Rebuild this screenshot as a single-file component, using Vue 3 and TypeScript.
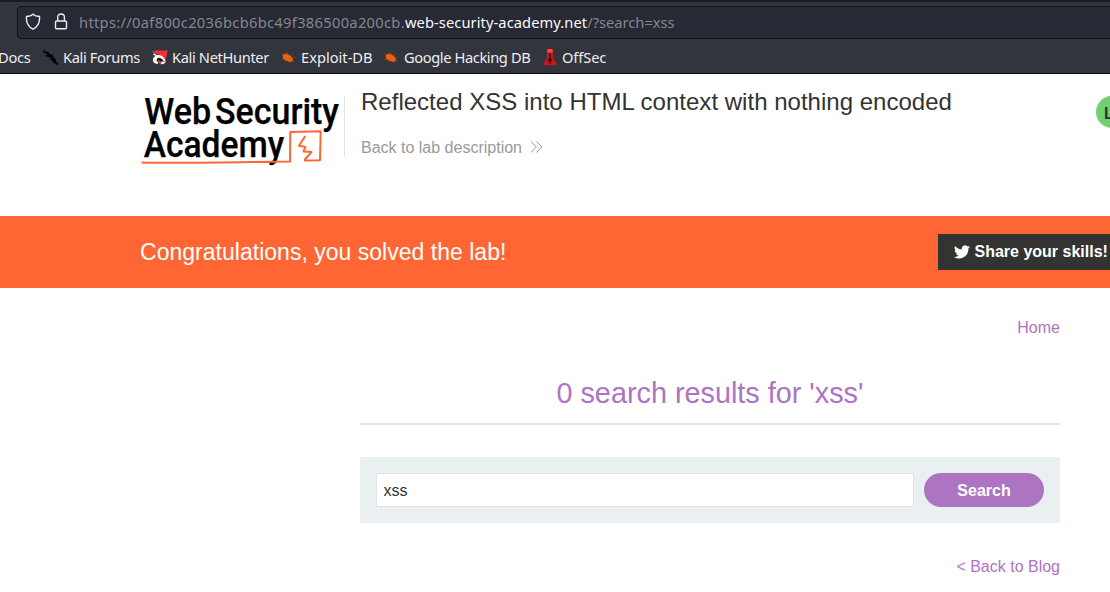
<script setup lang="ts">
import { ref } from 'vue'

type BookmarkIcon = 'none' | 'forum' | 'hunter' | 'bug' | 'offsec'

interface Bookmark {
  label: string
  icon: BookmarkIcon
  width: number
  tracking: number
}

const bookmarks: Bookmark[] = [
  { label: 'Docs', icon: 'none', width: 43, tracking: -0.3 },
  { label: 'Kali Forums', icon: 'forum', width: 109, tracking: -0.37 },
  { label: 'Kali NetHunter', icon: 'hunter', width: 129, tracking: -0.36 },
  { label: 'Exploit-DB', icon: 'bug', width: 103, tracking: 0 },
  { label: 'Google Hacking DB', icon: 'bug', width: 158, tracking: -0.4 },
  { label: 'OffSec', icon: 'offsec', width: 80, tracking: -0.1 },
]

const query = ref('xss')
</script>

<template>
  <div class="window">
    <header class="chrome">
      <div class="address">
        <svg class="shield" width="16" height="18" viewBox="0 0 16 18">
          <path d="M8 1.2C6.2 2.9 4 3.3 1.5 3.5C1 9.2 3.1 13.8 8 16.2C12.9 13.8 15 9.2 14.5 3.5C12 3.3 9.8 2.9 8 1.2Z" />
        </svg>
        <svg class="lock" width="14" height="18" viewBox="0 0 14 18">
          <rect x="1.5" y="8" width="11" height="7.8" rx="1.3" />
          <path d="M3.7 8V4.2C3.7 -.1 10.4 -.1 10.4 4.2V8" />
        </svg>
        <span class="url"><span class="host">https://0af800c2036bcb6bc49f386500a200cb.</span><b>web-security-academy.net</b>/?search=xss</span>
      </div>
      <nav class="bookmarks">
        <a v-for="item in bookmarks" :key="item.label" class="bookmark" :class="item.icon" :style="{ width: item.width + 'px', letterSpacing: item.tracking + 'px' }">
          <svg v-if="item.icon === 'forum'" width="16" height="16" viewBox="0 0 16 16">
            <path fill="#000" d="M0 0L4 2L5 1.2L6.5 3.7L10 5.3L10.5 7.3L12.5 9.3L13.7 12.5L16 13.8L14 14.8L11 14L9.3 11L6.5 9L5.5 7L3 6.2L1.8 3.5L.4 2.8Z" />
            <path stroke="#777b80" stroke-width=".6" fill="none" d="M1.5 3L4 5M6.5 7L8 9M11 13L12 14.5" />
          </svg>
          <svg v-else-if="item.icon === 'hunter'" width="16" height="16" viewBox="0 0 16 16">
            <path fill="#f52d38" d="M2 .5H15.7L13 13L11 9L8 5L4 3.5Z" />
            <path fill="#fff" d="M0 .7L4 4.2L2 3.6L5 5.2C9 4 13 7.5 13.7 12L11.5 10.8C9.5 7.3 6 7 4.8 9.3C4.1 11 5.5 12 6.5 12.3L5.5 14C2.5 13.8 .9 12.2 .9 10C.7 8 2.3 6.6 3.6 6L.5 4L2.5 3.8Z" />
            <path fill="#111" d="M4.8 9.5C6 7.2 9 8.3 11 11L10 12C8.8 10.2 7 9 6 10L6.5 12Z" />
            <path fill="#f52d38" d="M6 10.8C7 9.7 9 11 9.7 12.5L8 13.8L6.6 12.6Z" />
            <path fill="#fff" d="M9.8 11.3L13.7 12.2L11.5 14L8.5 14.3Z" />
          </svg>
          <svg v-else-if="item.icon === 'bug'" width="16" height="16" viewBox="0 0 16 16">
            <path fill="#ed6010" d="M2.6 5L5.5 3.5L8.7 4.5L12 7L13.4 10.7L10.5 12L5.8 10.7L3 8.2Z" />
            <path stroke="#ae4c1d" stroke-width=".6" fill="none" d="M4 5L1.8 3.2M7 5L7.8 2.3M9 6L12.5 4.3M11 8L15 7.4M5 9L1.3 9.6M7 10L4.4 12.5M10 11L10.4 13M12 10L14.7 12" />
          </svg>
          <svg v-else-if="item.icon === 'offsec'" width="16" height="17" viewBox="0 0 16 17">
            <path fill="#cf141c" d="M5 0H11V9.5L14.5 14V16.3H1.5V14L5 9.5Z" />
            <path fill="#ff4149" d="M5.5 0H10.5V3.5H5.5Z" />
            <path fill="#28080c" d="M7.3 4.5H8.7V9L10.3 11.5L8.6 12.5V15H7.4V12.5L5.7 11.5L7.3 9Z" />
          </svg>
          <span>{{ item.label }}</span>
        </a>
      </nav>
    </header>

    <section class="lab-header">
      <svg class="logo" width="205" height="76" viewBox="140 92 205 76">
        <g class="logo-text">
          <text x="144.2" y="124.3" font-size="37.3" textLength="67" lengthAdjust="spacingAndGlyphs">Web</text>
          <text x="215" y="124.3" font-size="37.3" textLength="124" lengthAdjust="spacingAndGlyphs">Security</text>
          <text x="143.7" y="157" font-size="37.3" textLength="140.5" lengthAdjust="spacingAndGlyphs">Academy</text>
        </g>
        <path class="logo-line" stroke-width="2" d="M141.5 162.5C180 163.5 220 162.5 290 161.5L290.3 132L320.7 131.3L320 160.3L304 160.5" />
        <path class="logo-line" stroke-width="2" d="M305.2 136L299 145.7L305.5 147L303.5 151.5L311.5 152L304.5 160" />
      </svg>
      <div class="lab-copy">
        <h2>Reflected XSS into HTML context with nothing encoded</h2>
        <a class="back-lab">Back to lab description
          <svg width="14" height="14" viewBox="0 0 14 14"><path d="M1 1.5L6.3 7L1 12.5M6.5 1.5L11.8 7L6.5 12.5" /></svg>
        </a>
      </div>
      <span class="status">LAB</span>
    </section>

    <section class="banner">
      <span class="congrats">Congratulations, you solved the lab!</span>
      <button class="share">
        <svg width="16" height="14" viewBox="0 0 24 20">
          <path d="M24 2.4a10 10 0 0 1-2.8.8A5 5 0 0 0 23.3.5a10 10 0 0 1-3.1 1.2 4.9 4.9 0 0 0-8.4 4.5A14 14 0 0 1 1.7 1a4.9 4.9 0 0 0 1.5 6.6A5 5 0 0 1 1 7a4.9 4.9 0 0 0 4 4.9 5 5 0 0 1-2.3.1 4.9 4.9 0 0 0 4.6 3.4A10 10 0 0 1 0 17.4 14 14 0 0 0 21.5 4.9 10 10 0 0 0 24 2.4Z" />
        </svg>
        <span>Share your skills!</span>
      </button>
    </section>

    <main class="blog">
      <a class="home">Home</a>
      <h1>0 search results for 'xss'</h1>
      <form class="search" @submit.prevent>
        <input v-model="query" type="text">
        <button type="submit">Search</button>
      </form>
      <a class="back-blog">&lt; Back to Blog</a>
    </main>
  </div>
</template>

<style>
body { background: #fff; overflow: hidden; }
</style>

<style scoped>
* { box-sizing: border-box; }
.window { width: 1110px; height: 592px; overflow: hidden; background: #fff; font: 16px/20px "Liberation Sans", sans-serif; color: #333332; }
.chrome { height: 74px; padding-top: 3px; background: #33353c; border-top: 2px solid #1b1c23; border-bottom: 1px solid #08080b; font-family: "Noto Sans", sans-serif; font-size: 14.67px; }
.address { width: 1110px; height: 33px; margin: 1px 0 0 17px; border: 1px solid #101117; border-radius: 4px; background: #272935; display: flex; align-items: center; color: #85878e; white-space: nowrap; }
.shield { margin-left: 7px; }
.lock { margin-left: 13px; }
.shield, .lock { flex: none; margin-top: -1px; fill: none; stroke: #ececf0; stroke-width: 1.4; }
.url { margin: -2px 0 0 11px; }
.host { letter-spacing: .32px; }
.url b { color: #fbfbfe; font-weight: 400; letter-spacing: .09px; }
.bookmarks { height: 34px; padding-top: 2px; display: flex; align-items: center; color: #eeeef2; white-space: nowrap; }
.bookmark { flex: none; display: flex; align-items: center; gap: 4px; }
.bookmark svg { flex: none; }
.forum svg, .hunter svg, .bug svg { margin-top: 2px; }
.bug svg { margin-left: -1px; margin-right: 1px; }
.none { margin-left: -2px; margin-right: 2px; }
.lab-header { height: 142px; padding-left: 140px; display: flex; }
.logo { flex: none; margin-top: 18px; overflow: visible; }
.logo-text { font-family: Roboto, sans-serif; font-weight: 500; fill: #000; stroke: #000; stroke-width: .25; }
.logo-line { fill: none; stroke: #ff6633; stroke-linejoin: round; }
.lab-copy { flex: none; width: 735px; height: 61px; margin-top: 22px; margin-left: -1px; padding-left: 16px; border-left: 1px solid #e2e2e2; }
h2 { margin: -8px 0 0; font-size: 24px; line-height: 28px; font-weight: 400; letter-spacing: .015px; white-space: nowrap; }
.back-lab { display: flex; align-items: center; gap: 8px; height: 20px; margin-top: 22px; color: #999; white-space: nowrap; }
.back-lab svg { margin-top: -2px; fill: none; stroke: #999; stroke-width: 1; }
.status { flex: none; width: 100px; height: 32px; margin: 22px 0 0 17px; padding: 8px 0 0 8px; border-radius: 16px; background: #6fd16f; font-weight: 700; line-height: 20px; }
.banner { height: 72px; padding-left: 140px; background: #ff6633; display: flex; align-items: center; }
.congrats { flex: none; width: 798px; color: #fff; font-size: 23px; line-height: 28px; letter-spacing: .02px; }
.share { flex: none; width: 184px; height: 36px; padding: 0 16px; border: 0; background: #333332; color: #fff; display: flex; align-items: center; gap: 4.5px; font: 700 16px/20px "Liberation Sans", sans-serif; white-space: nowrap; }
.share svg { fill: #fff; flex: none; }
.blog { width: 700px; margin-left: 360px; padding-top: 30px; display: flex; flex-direction: column; }
.home, .back-blog { align-self: flex-end; color: #ad74c3; line-height: 20px; }
h1 { margin: 36px 0 0; height: 51px; border-bottom: 2px solid #e1e3e3; color: #ad74c3; text-align: center; font-size: 28.8px; line-height: 38px; font-weight: 400; }
.search { height: 66px; margin-top: 32px; padding: 16px; background: #eaeff2; display: flex; gap: 10px; }
.search input { width: 538px; height: 34px; padding: 2px 6.5px 0; border: 1px solid #e1e3e3; background: #fff; color: #333332; font: 16px "Liberation Sans", sans-serif; }
.search button { width: 120px; height: 34px; padding: 2px 0 0; border: 0; border-radius: 17px; background: #ad74c3; color: #fff; font: 700 16px "Liberation Sans", sans-serif; }
.back-blog { margin-top: 34px; }
</style>
